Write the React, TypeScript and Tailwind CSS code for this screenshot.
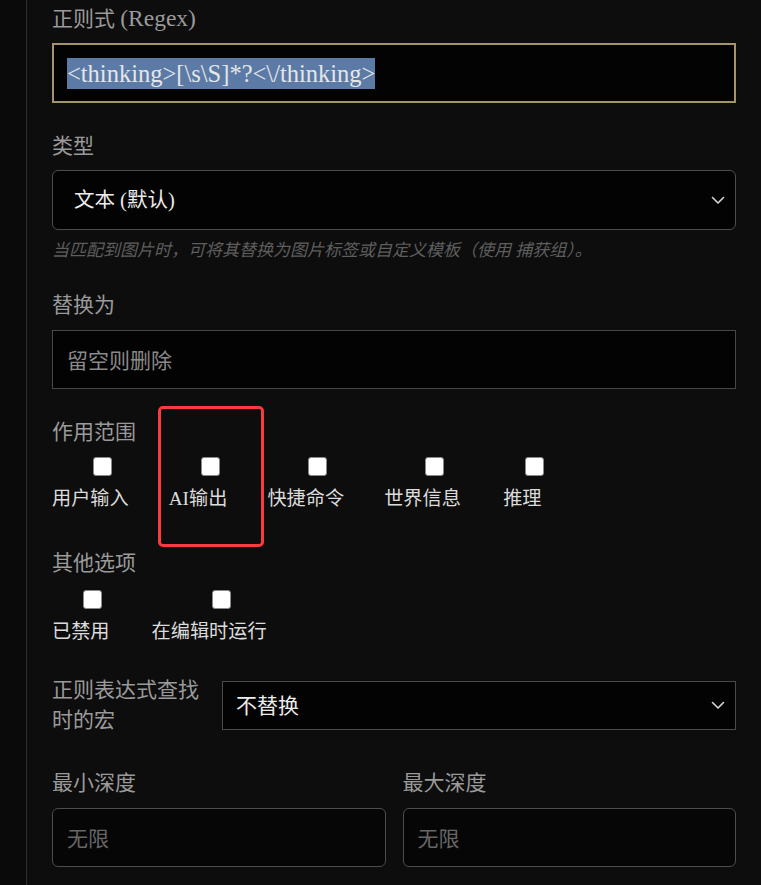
import React from "react";

const serif = { fontFamily: '"Liberation Serif", "Noto Sans CJK SC", serif' };
const sans = { fontFamily: '"Noto Sans CJK SC", "Liberation Sans", sans-serif' };

function Chevron() {
  return (
    <svg width="14" height="9" viewBox="0 0 14 9" fill="none" className="shrink-0">
      <path d="M1.5 1.5 L7 7 L12.5 1.5" stroke="#d8d8d8" strokeWidth="1.6" strokeLinecap="round" strokeLinejoin="round" />
    </svg>
  );
}

function Box() {
  return <div className="w-[19px] h-[19px] rounded-[3px] bg-white border border-[#8a8a8a] ml-6" />;
}

function Check({ label }: { label: string }) {
  return (
    <div className="flex flex-col items-center">
      <Box />
      <div className="text-[19.2px] leading-[26px] text-[#dcdcdc] mt-[10px] whitespace-nowrap" style={serif}>
        {label}
      </div>
    </div>
  );
}

function Label({ children, className = "" }: { children: React.ReactNode; className?: string }) {
  return (
    <div className={"text-[21px] leading-[30px] text-[#9a9a9a] " + className} style={serif}>
      {children}
    </div>
  );
}

export default function App() {
  return (
    <div className="w-[761px] h-[885px] bg-[#0d0d0d] flex overflow-hidden relative">
      <div className="w-[27px] shrink-0 bg-[#0a0a0a] border-r border-[#2e2e2e]" />
      <div className="flex-1 px-[25px] pt-[4px] flex flex-col">
        <Label className="h-[30px]">
          正则式 <span className="text-[23.5px] leading-none">(Regex)</span>
        </Label>
        <div className="mt-[9px] h-[60px] border-2 border-[#a3946b] bg-[#030303] flex items-center pl-[13px]">
          <span className="bg-[#5b7aa6] text-[#e6e6e6] text-[24.5px] leading-[31px]" style={serif}>
            {"<thinking>[\\s\\S]*?<\\/thinking>"}
          </span>
        </div>

        <Label className="mt-[28px]">类型</Label>
        <div className="mt-[9px] h-[60px] rounded-[6px] border border-[#4d4d4d] bg-[#030303] flex items-center justify-between pl-[21px] pr-[10px]">
          <span className="text-[20.5px] text-[#ececec]" style={serif}>文本 (默认)</span>
          <Chevron />
        </div>
        <div className="mt-[9px] text-[17px] leading-[24px] italic text-[#5e5e5e]" style={serif}>
          当匹配到图片时，可将其替换为图片标签或自定义模板（使用 捕获组）。
        </div>

        <Label className="mt-[27px]">替换为</Label>
        <div className="mt-[10px] h-[59px] border border-[#474747] bg-[#030303] flex items-center pl-[14px]">
          <span className="text-[21px] text-[#8a8a8a]" style={sans}>留空则删除</span>
        </div>

        <Label className="mt-[28px]">作用范围</Label>
        <div className="mt-[10px] flex gap-[40px]">
          <Check label="用户输入" />
          <Check label="AI输出" />
          <Check label="快捷命令" />
          <Check label="世界信息" />
          <Check label="推理" />
        </div>

        <Label className="mt-[36px]">其他选项</Label>
        <div className="mt-[12px] flex gap-[42px]">
          <Check label="已禁用" />
          <Check label="在编辑时运行" />
        </div>

        <div className="mt-[30px] flex items-center">
          <Label className="w-[150px] shrink-0">正则表达式查找时的宏</Label>
          <div className="ml-[20px] flex-1 h-[49px] border border-[#4a4a4a] bg-[#030303] flex items-center justify-between pl-[13px] pr-[10px]">
            <span className="text-[21px] text-[#ececec]" style={sans}>不替换</span>
            <Chevron />
          </div>
        </div>

        <div className="mt-[33px] grid grid-cols-2 gap-[17px]">
          <div className="flex flex-col">
            <Label>最小深度</Label>
            <div className="mt-[10px] h-[59px] rounded-[6px] border border-[#4d4d4d] bg-[#060606] flex items-center pl-[14px]">
              <span className="text-[21px] text-[#666]" style={sans}>无限</span>
            </div>
          </div>
          <div className="flex flex-col">
            <Label>最大深度</Label>
            <div className="mt-[10px] h-[59px] rounded-[6px] border border-[#4d4d4d] bg-[#060606] flex items-center pl-[14px]">
              <span className="text-[21px] text-[#666]" style={sans}>无限</span>
            </div>
          </div>
        </div>
      </div>
      <div className="absolute left-[158px] top-[406px] w-[106px] h-[141px] border-[3px] border-[#fa3a3c] rounded-[5px] pointer-events-none" />
    </div>
  );
}
